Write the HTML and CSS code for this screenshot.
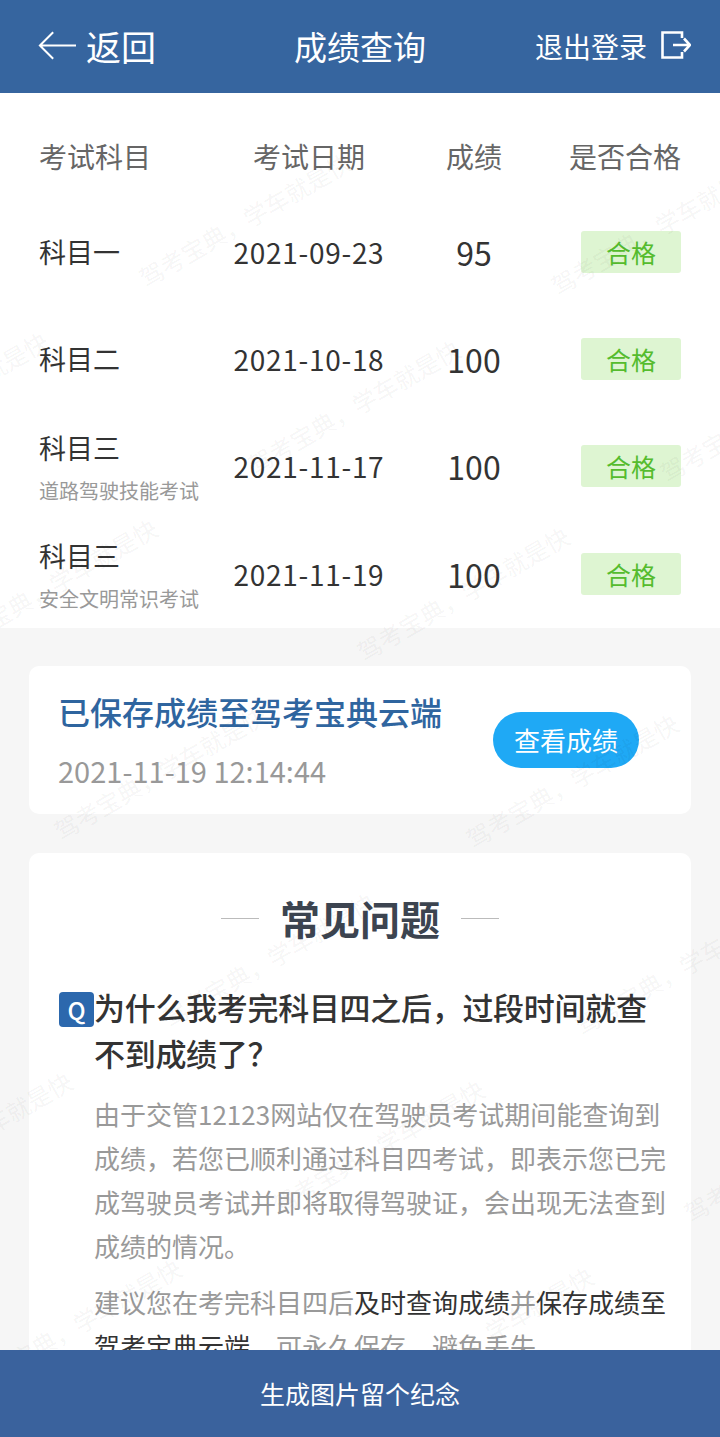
FILE: index.html
```html
<!DOCTYPE html>
<html lang="zh-CN">
<head>
    <meta charset="UTF-8">
    <meta name="viewport" content="width=device-width, initial-scale=1.0">
    <title>成绩查询</title>
    <link rel="stylesheet" href="styles.css">
</head>
<body>
    <header class="topbar">
        <div class="back">
            <svg class="back-icon" viewBox="0 0 40 32" fill="none" stroke="#fff" stroke-width="2.100">
                <path d="M40 16H2M16 2 2 16l14 14"/>
            </svg>
            <span>返回</span>
        </div>
        <div class="topbar-title">成绩查询</div>
        <div class="logout">
            <span>退出登录</span>
            <svg class="logout-icon" viewBox="0 0 30 28" fill="none" stroke="#fff" stroke-width="2.600">
                <path d="M21 7V1.500H1.500v25H21V21M12 14h17M23 7.500l6 6.500-6 6.500"/>
            </svg>
        </div>
    </header>

    <main class="content">
        <section class="scores">
            <div class="score-row score-head">
                <div>考试科目</div>
                <div class="cell-center">考试日期</div>
                <div class="cell-center">成绩</div>
                <div class="cell-end">是否合格</div>
            </div>
            <div class="score-row">
                <div class="subject">科目一</div>
                <div class="cell-center date">2021-09-23</div>
                <div class="cell-center num">95</div>
                <div class="cell-end"><span class="tag">合格</span></div>
            </div>
            <div class="score-row">
                <div class="subject">科目二</div>
                <div class="cell-center date">2021-10-18</div>
                <div class="cell-center num">100</div>
                <div class="cell-end"><span class="tag">合格</span></div>
            </div>
            <div class="score-row">
                <div class="subject has-note">科目三<small>道路驾驶技能考试</small></div>
                <div class="cell-center date">2021-11-17</div>
                <div class="cell-center num">100</div>
                <div class="cell-end"><span class="tag">合格</span></div>
            </div>
            <div class="score-row">
                <div class="subject has-note">科目三<small>安全文明常识考试</small></div>
                <div class="cell-center date">2021-11-19</div>
                <div class="cell-center num">100</div>
                <div class="cell-end"><span class="tag">合格</span></div>
            </div>
        </section>

        <section class="card saved">
            <div>
                <div class="saved-title">已保存成绩至驾考宝典云端</div>
                <div class="saved-time">2021-11-19 12:14:44</div>
            </div>
            <div class="saved-btn">查看成绩</div>
        </section>

        <section class="card faq">
            <h2 class="faq-title">常见问题</h2>
            <div class="question">
                <span class="q-mark">Q</span>
                <div class="q-text">为什么我考完科目四之后，过段时间就查不到成绩了？</div>
            </div>
            <p class="answer">由于交管12123网站仅在驾驶员考试期间能查询到成绩，若您已顺利通过科目四考试，即表示您已完成驾驶员考试并即将取得驾驶证，会出现无法查到成绩的情况。</p>
            <p class="answer">建议您在考完科目四后<b>及时查询成绩</b>并<b>保存成绩至驾考宝典云端</b>，可永久保存，避免丢失。</p>
        </section>

        <div class="watermarks" id="watermarks"></div>
    </main>

    <footer class="bottombar">生成图片留个纪念</footer>

    <script>
        // watermark repeats on a slanted lattice
        var layer = document.getElementById("watermarks");
        for (var j = -2; j <= 1; j++) {
            for (var i = -1; i <= 7; i++) {
                var x = 147 + i * 109 + j * 412;
                var y = 265 + i * 187 + j * 8;
                if (x < -240 || x > 720 || y < 90 || y > 1400) continue;
                var mark = document.createElement("span");
                mark.className = "watermark";
                mark.textContent = "驾考宝典，学车就是快";
                mark.style.left = x + "px";
                mark.style.top = (y - 92) + "px";
                layer.appendChild(mark);
            }
        }
    </script>
</body>
</html>
```

FILE: styles.css
```css
* {
    box-sizing: border-box;
}
html, body {
    height: 100%;
}
body {
    margin: 0;
    display: flex;
    flex-direction: column;
    height: 1437px;
    overflow: hidden;
    background: #f6f6f6;
    font-family: "Noto Sans CJK SC", "Noto Sans", sans-serif;
    color: #333;
}

.topbar {
    flex: none;
    height: 93px;
    padding: 0 29px 2px;
    display: grid;
    grid-template-columns: 1fr auto 1fr;
    align-items: center;
    background: #36659f;
    color: #fff;
    position: relative;
    z-index: 2;
}
.back {
    margin-left: 9px;
    display: flex;
    align-items: center;
    gap: 10px;
    font-size: 35px;
}
.back-icon {
    width: 38px;
    height: 31px;
}
.topbar-title {
    font-size: 33px;
}
.logout {
    display: flex;
    align-items: center;
    justify-content: flex-end;
    gap: 14px;
    font-size: 28px;
}
.logout-icon {
    width: 30px;
    height: 28px;
    margin-bottom: 2px;
}

.content {
    flex: 1;
    min-height: 0;
    overflow: hidden;
    position: relative;
}

.scores {
    height: 535px;
    padding: 0 39px;
    background: #fff;
}
.score-row {
    height: 107.33px;
    display: grid;
    grid-template-columns: 180px 180px 150px 132px;
    align-items: center;
    font-size: 28px;
    color: #333;
}
.score-head {
    height: 105px;
    padding-top: 20px;
    color: #666;
}
.cell-center {
    text-align: center;
}
.cell-end {
    display: flex;
    justify-content: flex-end;
}
.subject {
    font-size: 27px;
    line-height: 40px;
}
.has-note {
    padding-top: 2px;
}
.subject small {
    display: block;
    margin-top: 8px;
    font-size: 20px;
    line-height: 30px;
    color: #999;
}
.date {
    letter-spacing: 0.7px;
}
.num {
    font-size: 32px;
}
.tag {
    width: 100px;
    height: 42px;
    border-radius: 3px;
    background: #def5d2;
    color: #55bc2e;
    font-size: 25px;
    line-height: 42px;
    text-align: center;
}

.card {
    margin: 38px 29px 0;
    background: #fff;
    border-radius: 10px;
}
.saved {
    height: 148px;
    padding: 0 52px 2px 29px;
    display: flex;
    align-items: center;
    justify-content: space-between;
}
.saved-title {
    font-size: 32px;
    font-weight: 500;
    line-height: 44px;
    color: #2f659f;
}
.saved-time {
    margin-top: 17px;
    font-size: 29px;
    line-height: 40px;
    color: #999;
}
.saved-btn {
    width: 146px;
    height: 56px;
    margin-top: 2px;
    border-radius: 28px;
    background: #1fa9f5;
    color: #fff;
    font-size: 26px;
    line-height: 56px;
    text-align: center;
}

.faq {
    margin-top: 39px;
    height: 700px;
    padding: 36px 21px 0 30px;
}
.faq-title {
    margin: 0 9px 37px 0;
    display: flex;
    align-items: center;
    justify-content: center;
    gap: 21px;
    font-size: 40px;
    font-weight: 700;
    line-height: 58px;
    color: #3c4450;
}
.faq-title::before,
.faq-title::after {
    content: "";
    width: 38px;
    height: 1px;
    background: #bbb;
}
.question {
    display: flex;
    align-items: flex-start;
}
.q-mark {
    flex: none;
    width: 35px;
    height: 35px;
    margin-top: 8px;
    border-radius: 4px;
    background: #2c68ad;
    color: #fff;
    font-size: 24px;
    font-weight: 500;
    line-height: 35px;
    text-align: center;
}
.q-text {
    font-size: 31px;
    font-weight: 500;
    line-height: 46px;
    letter-spacing: -0.3px;
    color: #333;
}
.answer {
    margin: 0 0 0 35px;
    font-size: 26px;
    line-height: 44px;
    color: #999;
}
.question + .answer {
    margin-top: 16px;
}
.answer + .answer {
    margin-top: 12px;
}
.answer b {
    font-weight: 400;
    color: #333;
}

.watermarks {
    position: absolute;
    inset: 0;
    pointer-events: none;
    z-index: 1;
}
.watermark {
    position: absolute;
    font-size: 24px;
    line-height: 1;
    white-space: nowrap;
    color: rgba(0, 0, 0, 0.055);
    transform: rotate(-30deg);
    transform-origin: 0 100%;
}

.bottombar {
    flex: none;
    height: 87px;
    background: #3a629d;
    color: #fff;
    font-size: 25px;
    line-height: 86px;
    text-align: center;
    position: relative;
    z-index: 2;
}
```
